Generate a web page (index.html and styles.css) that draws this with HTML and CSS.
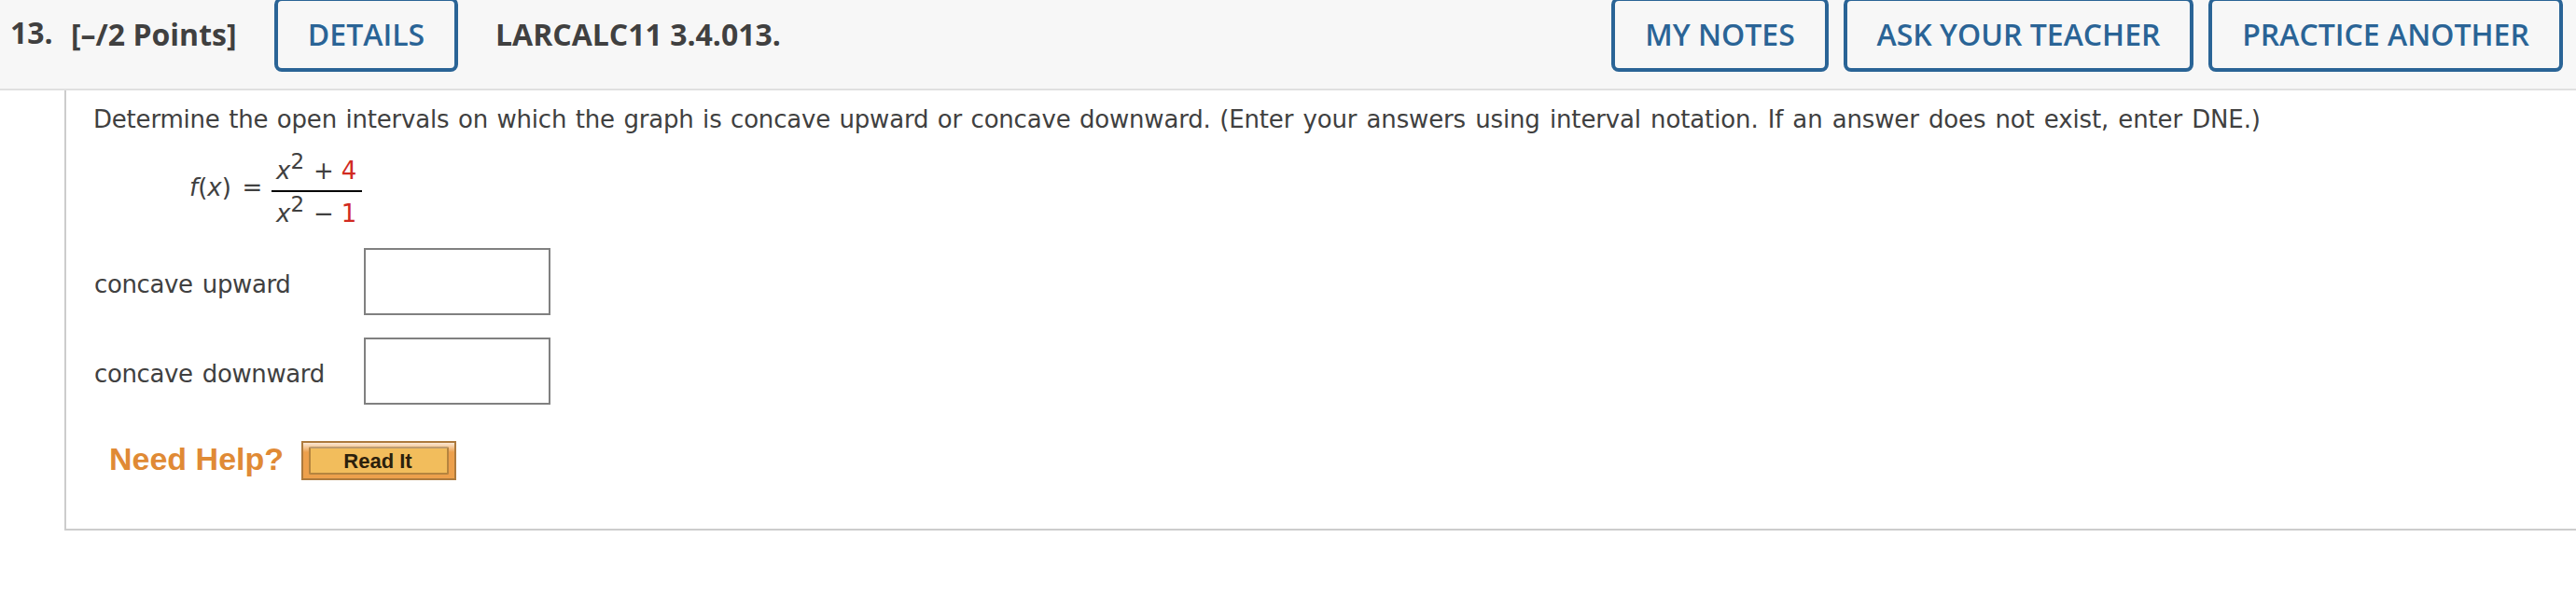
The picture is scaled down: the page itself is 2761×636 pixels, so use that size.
FILE: index.html
```html
<!DOCTYPE html>
<html lang="en">
<head>
    <meta charset="UTF-8">
    <meta name="viewport" content="width=device-width, initial-scale=1.0">
    <title>LARCALC11 3.4.013.</title>
    <link rel="stylesheet" href="styles.css">
</head>
<body>
    <header class="header">
        <span class="number">13.</span>
        <span class="points">[–/2 Points]</span>
        <button type="button" class="btn btn-details">DETAILS</button>
        <span class="source">LARCALC11 3.4.013.</span>
        <div class="actions">
            <button type="button" class="btn btn-notes">MY NOTES</button>
            <button type="button" class="btn btn-teacher">ASK YOUR TEACHER</button>
            <button type="button" class="btn btn-practice">PRACTICE ANOTHER</button>
        </div>
    </header>

    <main class="question">
        <p class="prompt">Determine the open intervals on which the graph is concave upward or concave downward. <span class="note">(Enter your answers using interval notation. If an answer does not exist, enter DNE.)</span></p>

        <div class="equation">
            <span class="lhs"><i>f</i>(<i>x</i>) =</span>
            <div class="fraction">
                <div class="term"><i>x</i><span class="power">2</span><span class="op">+</span><span class="red">4</span></div>
                <div class="term denominator"><i>x</i><span class="power">2</span><span class="op">−</span><span class="red">1</span></div>
            </div>
        </div>

        <form class="answers">
            <div class="row">
                <label for="upward">concave upward</label>
                <input type="text" id="upward" name="upward">
            </div>
            <div class="row">
                <label for="downward">concave downward</label>
                <input type="text" id="downward" name="downward">
            </div>
        </form>

        <div class="help">
            <span class="help-title">Need Help?</span>
            <button type="button" class="read-it"><span>Read It</span></button>
        </div>
    </main>
</body>
</html>
```
FILE: styles.css
```css
* {
    margin: 0;
    padding: 0;
    box-sizing: border-box;
}
body {
    background-color: #fff;
    color: #404040;
    font-family: Verdana, "DejaVu Sans", sans-serif;
    font-size: 26px;
    overflow: hidden;
}
.header {
    display: flex;
    align-items: flex-start;
    height: 97px;
    padding: 0 14px 0 11px;
    background-color: #f7f7f7;
    border-bottom: 2px solid #e0e0e0;
    font-family: "Open Sans", sans-serif;
    font-size: 32px;
    font-weight: 700;
    line-height: 44px;
    white-space: nowrap;
}
.number {
    width: 65px;
    padding-top: 13px;
}
.points {
    width: 218px;
    padding-top: 15px;
}
.source {
    margin-left: 40px;
    padding-top: 15px;
}
.actions {
    display: flex;
    gap: 16px;
    margin-left: auto;
}
.btn {
    height: 80px;
    margin-top: -3px;
    background: none;
    border: 4px solid #2a6496;
    border-radius: 8px;
    color: #2a6496;
    font: 600 32px/44px "Open Sans", sans-serif;
    white-space: nowrap;
}
.btn-details {
    width: 197px;
}
.btn-notes {
    width: 233px;
}
.btn-teacher {
    width: 375px;
}
.btn-practice {
    width: 380px;
}
.question {
    height: 472px;
    margin-left: 69px;
    padding: 15px 0 0 29px;
    border-left: 2px solid #ccc;
    border-bottom: 2px solid #ccc;
}
.prompt {
    letter-spacing: -0.2px;
    word-spacing: 1.5px;
    line-height: 32px;
    white-space: nowrap;
}
.note {
    letter-spacing: -0.13px;
    word-spacing: 2px;
}
.equation {
    display: flex;
    margin: 13px 0 0 103px;
    height: 97px;
    line-height: 32px;
    white-space: nowrap;
}
.lhs {
    width: 88px;
    padding-top: 28px;
    word-spacing: 3.5px;
}
.fraction {
    width: 97px;
}
.term {
    display: flex;
    height: 47px;
    padding: 10px 0 0 5px;
}
.denominator {
    height: 49px;
    padding-top: 7px;
    border-top: 2px solid #000;
}
.power {
    margin-top: -10px;
    font-size: 23px;
}
.op {
    margin-left: 10px;
}
.red {
    margin-left: 8px;
    color: #d12a1f;
}
.answers {
    display: flex;
    flex-direction: column;
    gap: 24px;
    margin: 12px 0 0 1px;
    letter-spacing: -0.4px;
    word-spacing: 2.5px;
}
.row {
    display: flex;
    align-items: center;
    height: 72px;
}
.row label {
    width: 289px;
    padding-top: 6px;
}
.row input {
    width: 200px;
    height: 72px;
    border: 2px solid #808080;
    background-color: #fff;
}
.help {
    display: flex;
    align-items: center;
    margin: 39px 0 0 17px;
    height: 42px;
    font-family: Arial, "Liberation Sans", sans-serif;
}
.help-title {
    width: 206px;
    margin-top: -3px;
    color: #e08a35;
    font-size: 34px;
    font-weight: 700;
    white-space: nowrap;
}
.read-it {
    width: 166px;
    height: 42px;
    padding: 4px 6px;
    border: 2px solid #ad7a3d;
    background: linear-gradient(#fbe9d6, #eda04c 10px);
}
.read-it span {
    display: block;
    height: 30px;
    padding-right: 2px;
    border: 2px solid #b5843f;
    border-top-color: #bd9c70;
    border-radius: 2px;
    background-color: #f2bd5c;
    color: #2b200c;
    font: 700 22px/27px Arial, "Liberation Sans", sans-serif;
}
```
